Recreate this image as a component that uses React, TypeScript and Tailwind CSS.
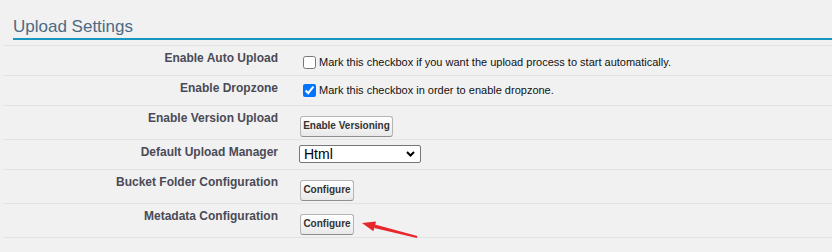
import React from 'react';

const rows = [
  { label: 'Enable Auto Upload', kind: 'check', checked: false, text: 'Mark this checkbox if you want the upload process to start automatically.', h: 'h-[30px]' },
  { label: 'Enable Dropzone', kind: 'check', checked: true, text: 'Mark this checkbox in order to enable dropzone.', h: 'h-[30px]' },
  { label: 'Enable Version Upload', kind: 'button', text: 'Enable Versioning', w: 'w-[93px]', h: 'h-[34px]' },
  { label: 'Default Upload Manager', kind: 'select', text: 'Html', h: 'h-[30px]' },
  { label: 'Bucket Folder Configuration', kind: 'button', text: 'Configure', w: 'w-[54px]', h: 'h-[34px]' },
  { label: 'Metadata Configuration', kind: 'button', text: 'Configure', w: 'w-[54px]', h: 'h-[34px]' },
];

const App = () => {
  return (
    <div className="relative w-[832px] h-[252px] bg-[#f1f1f1] overflow-hidden font-['Liberation_Sans',Arial,sans-serif]">
      {/* Section header */}
      <div className="pt-[17px] pl-[13px]">
        <h2 className="text-[17px] leading-[20px] text-[#4b6b84] pb-[1px] border-b-2 border-[#1797c0]">
          Upload Settings
        </h2>
      </div>

      <div className="mt-[5px] ml-[3px] border-t border-[#e3e3e3]">
        {rows.map((row, i) => (
          <div key={i} className={`grid grid-cols-[275px_1fr] border-b border-[#e3e3e3] ${row.h}`}>
            <div className="pt-[4px] text-right text-[12px] leading-4 font-bold text-[#4a4a56]">
              {row.label}
            </div>
            <div className="pl-[22px]">
              {row.kind === 'check' && (
                <label className={`flex items-center ${i === 0 ? 'pt-[10px]' : 'pt-[8px]'}`}>
                  <input
                    type="checkbox"
                    defaultChecked={row.checked}
                    className="m-0 ml-[3px] mr-[3px] w-[13px] h-[13px]"
                  />
                  <span className="text-[11px] leading-[13px] text-[#111]">{row.text}</span>
                </label>
              )}
              {row.kind === 'button' && (
                <div className="pt-[6px]">
                  <button
                    className={`${row.w} h-[21px] rounded-[3px] border border-[#b5b5b5] border-b-[#8f8f8f] bg-gradient-to-b from-white to-[#e9e9e9] text-[10px] font-bold text-[#333] leading-none`}
                  >
                    {row.text}
                  </button>
                </div>
              )}
              {row.kind === 'select' && (
                <div className="pt-[5px] -ml-[1px]">
                  <div className="relative w-[122px] h-[18px] bg-white border border-[#767676] rounded-[2px] flex items-center pl-[4px]">
                    <span className="text-[14px] leading-none text-black">{row.text}</span>
                    <svg className="absolute right-[5px] top-[5px]" width="9" height="6" viewBox="0 0 9 6">
                      <path d="M1 1 L4.5 4.5 L8 1" fill="none" stroke="#000" strokeWidth="2" />
                    </svg>
                  </div>
                </div>
              )}
            </div>
          </div>
        ))}
      </div>

      {/* red annotation arrow */}
      <svg className="absolute left-[355px] top-[214px]" width="70" height="30" viewBox="0 0 70 30">
        <polygon points="7,9 21,7.4 18.4,17.2" fill="#e8262b" />
        <polygon points="20,10.6 62.3,22 61.8,24 19.2,14" fill="#e8262b" />
      </svg>
    </div>
  );
};

export default App;
